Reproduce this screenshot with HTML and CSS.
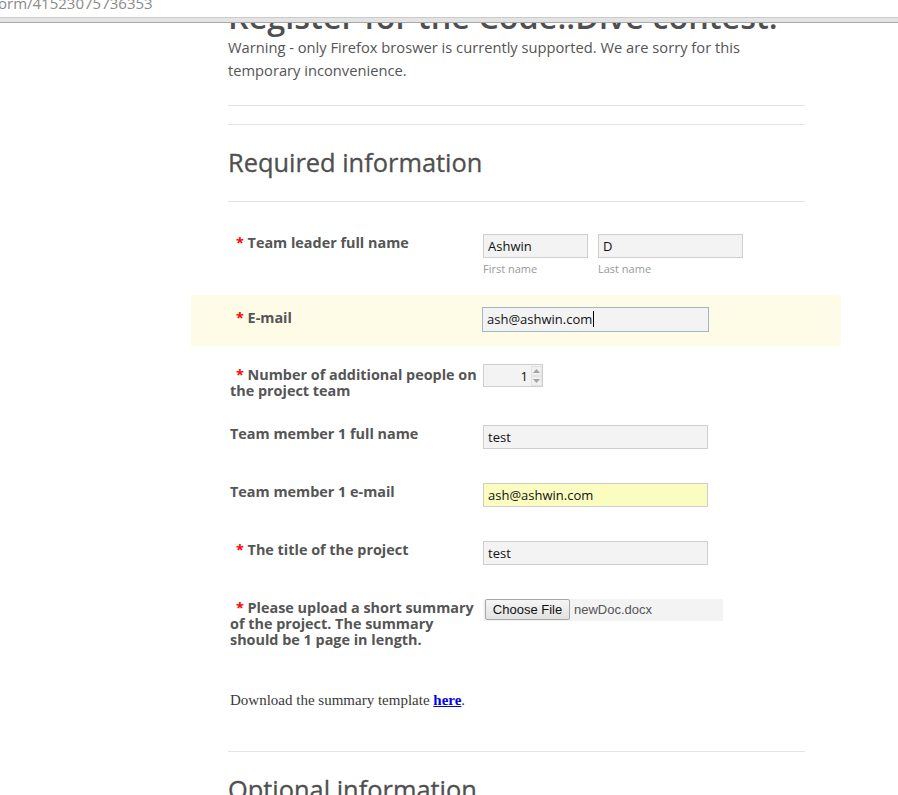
FILE: index.html
```html
<!DOCTYPE html>
<html lang="en">
<head>
<meta charset="utf-8">
<title>Register for the Code::Dive contest</title>
<link rel="stylesheet" href="styles.css">
</head>
<body>
<div class="topbar"><div class="url">orm/41523075736353</div></div>
<div class="band"></div>
<div class="viewport">
  <div class="main">
    <h1 class="title">Register for the Code::Dive contest.</h1>
    <p class="warning">Warning - only Firefox broswer is currently supported. We are sorry for this temporary inconvenience.</p>
    <hr class="sep sep-a">
    <hr class="sep sep-b">
    <h2 class="section">Required information</h2>
    <hr class="sep sep-c">
    <div class="rows">
      <div class="row row-name">
        <div class="label"><span class="req">*</span> Team leader full name</div>
        <div class="name-pair">
          <div class="sub">
            <div class="field f-first">Ashwin</div>
            <div class="hint">First name</div>
          </div>
          <div class="sub">
            <div class="field f-last">D</div>
            <div class="hint">Last name</div>
          </div>
        </div>
      </div>
      <div class="row row-focus">
        <div class="label label-low"><span class="req">*</span> E-mail</div>
        <div class="field f-wide f-focus">ash@ashwin.com<span class="caret"></span></div>
      </div>
      <div class="row row-number">
        <div class="label label-low"><span class="req">*</span> Number of additional people on<br>the project team</div>
        <div class="field f-number">
          <span class="num">1</span>
          <svg class="spin" width="11" height="20" viewBox="0 0 11 20" aria-hidden="true">
            <rect x="0.5" y="0.5" width="10" height="9" fill="#f0f0f0" stroke="#e2e2e2"/>
            <rect x="0.5" y="10.5" width="10" height="9" fill="#f0f0f0" stroke="#e2e2e2"/>
            <path d="M2 7 L5.5 3 L9 7 Z" fill="#a3a3a3"/>
            <path d="M2 13 L5.5 17 L9 13 Z" fill="#a3a3a3"/>
          </svg>
        </div>
      </div>
      <div class="row">
        <div class="label label-plain">Team member 1 full name</div>
        <div class="field f-wide">test</div>
      </div>
      <div class="row">
        <div class="label label-plain">Team member 1 e-mail</div>
        <div class="field f-wide f-auto">ash@ashwin.com</div>
      </div>
      <div class="row">
        <div class="label"><span class="req">*</span> The title of the project</div>
        <div class="field f-wide">test</div>
      </div>
      <div class="row row-file">
        <div class="label"><span class="req">*</span> Please upload a short summary<br>of the project. The summary<br>should be 1 page in length.</div>
        <div class="file">
          <button class="filebtn" type="button">Choose File</button>
          <span class="filename">newDoc.docx</span>
        </div>
      </div>
    </div>
    <p class="download">Download the summary template <a href="#">here</a>.</p>
    <hr class="sep sep-d">
    <h2 class="section">Optional information</h2>
  </div>
</div>
</body>
</html>
```
FILE: styles.css
```css
body {
  margin: 0;
  background: #fff;
  font-family: "Open Sans", "DejaVu Sans", sans-serif;
  color: #555;
}

.topbar {
  height: 17px;
  overflow: hidden;
  background: #fff;
}

.url {
  font-size: 15px;
  line-height: 17px;
  margin-top: -5px;
  margin-left: -2px;
  color: #8a8a8a;
  white-space: nowrap;
}

.band {
  height: 6px;
  box-sizing: border-box;
  border-top: 1px solid #cacaca;
  border-bottom: 1px solid #a8a8a8;
  background: #e4e4e4;
}

.viewport {
  height: 772px;
  overflow: hidden;
}

.main {
  margin-left: 228px;
  width: 577px;
}

.title {
  margin: -25px 0 0;
  font-size: 32.4px;
  line-height: 36px;
  font-weight: 600;
  color: #4f4f4f;
  white-space: nowrap;
}

.warning {
  margin: 2px 0 0;
  font-size: 14.7px;
  line-height: 23px;
  color: #555;
}

.sep {
  border: 0;
  border-top: 1px solid #e4e4e4;
  margin: 0;
}

.sep-a { margin-top: 23px; }
.sep-b { margin-top: 18px; }
.sep-c { margin-top: 21px; }
.sep-d { margin-top: 42px; }

.section {
  margin: 19px 0 0;
  font-size: 25.4px;
  line-height: 36px;
  font-weight: 500;
  color: #4f4f4f;
  -webkit-text-stroke: 0.3px #4f4f4f;
}

.rows {
  margin: 20px 0 0 -37px;
  width: 650px;
}

.row {
  display: flex;
  align-items: flex-start;
  box-sizing: border-box;
  height: 52px;
  padding: 12px 0 0 39px;
  margin-bottom: 6px;
}

.row-name { height: 67px; }
.row-focus { height: 51px; background: #fefbe7; }
.row-number { height: 55px; }
.row-file { height: 72px; }

.label {
  width: 253px;
  flex: none;
  padding-top: 1px;
  font-size: 14.4px;
  line-height: 16px;
  font-weight: 700;
  color: #555;
  white-space: nowrap;
}

.label-low { padding-top: 3px; }

.req {
  margin-left: 6px;
  color: #f00;
}

.name-pair {
  display: flex;
  gap: 10px;
}

.field {
  box-sizing: border-box;
  height: 24px;
  padding: 0 4px;
  border: 1px solid #cecece;
  background: #f3f3f3;
  font-size: 13px;
  line-height: 22px;
  color: #111;
  white-space: nowrap;
}

.f-first { width: 105px; }
.f-last { width: 145px; }
.f-wide { width: 225px; }

.f-focus {
  width: 227px;
  height: 25px;
  margin-left: -1px;
  border-color: #a3b6c2;
  line-height: 23px;
}

.caret {
  display: inline-block;
  width: 1px;
  height: 16px;
  margin-left: 1px;
  vertical-align: -3px;
  background: #000;
}

.f-auto { background: #fafcc0; }

.f-number {
  display: flex;
  align-items: center;
  justify-content: flex-end;
  gap: 3px;
  width: 60px;
  height: 23px;
  padding: 0 0 0 4px;
}

.spin { display: block; }

.hint {
  margin-top: 4px;
  font-size: 11px;
  line-height: 14px;
  color: #999;
}

.file {
  display: flex;
  align-items: flex-start;
  width: 240px;
  height: 22px;
  padding-left: 2px;
  box-sizing: border-box;
  background: #f3f3f3;
}

.filebtn {
  box-sizing: border-box;
  height: 21px;
  width: 85px;
  padding: 0;
  border: 1px solid #a6a6a6;
  border-radius: 2px;
  background: linear-gradient(#f5f5f5, #e2e2e2);
  font-family: "Liberation Sans", Arial, sans-serif;
  font-size: 13px;
  color: #111;
}

.filename {
  margin-left: 4px;
  font-family: "Liberation Sans", Arial, sans-serif;
  font-size: 13px;
  line-height: 22px;
  color: #555;
}

.download {
  margin: 32px 0 0 2px;
  font-family: "Liberation Serif", "Times New Roman", serif;
  font-size: 15px;
  line-height: 18px;
  color: #3a3a3a;
}

.download a {
  color: #0000ee;
  font-weight: 700;
}
```
